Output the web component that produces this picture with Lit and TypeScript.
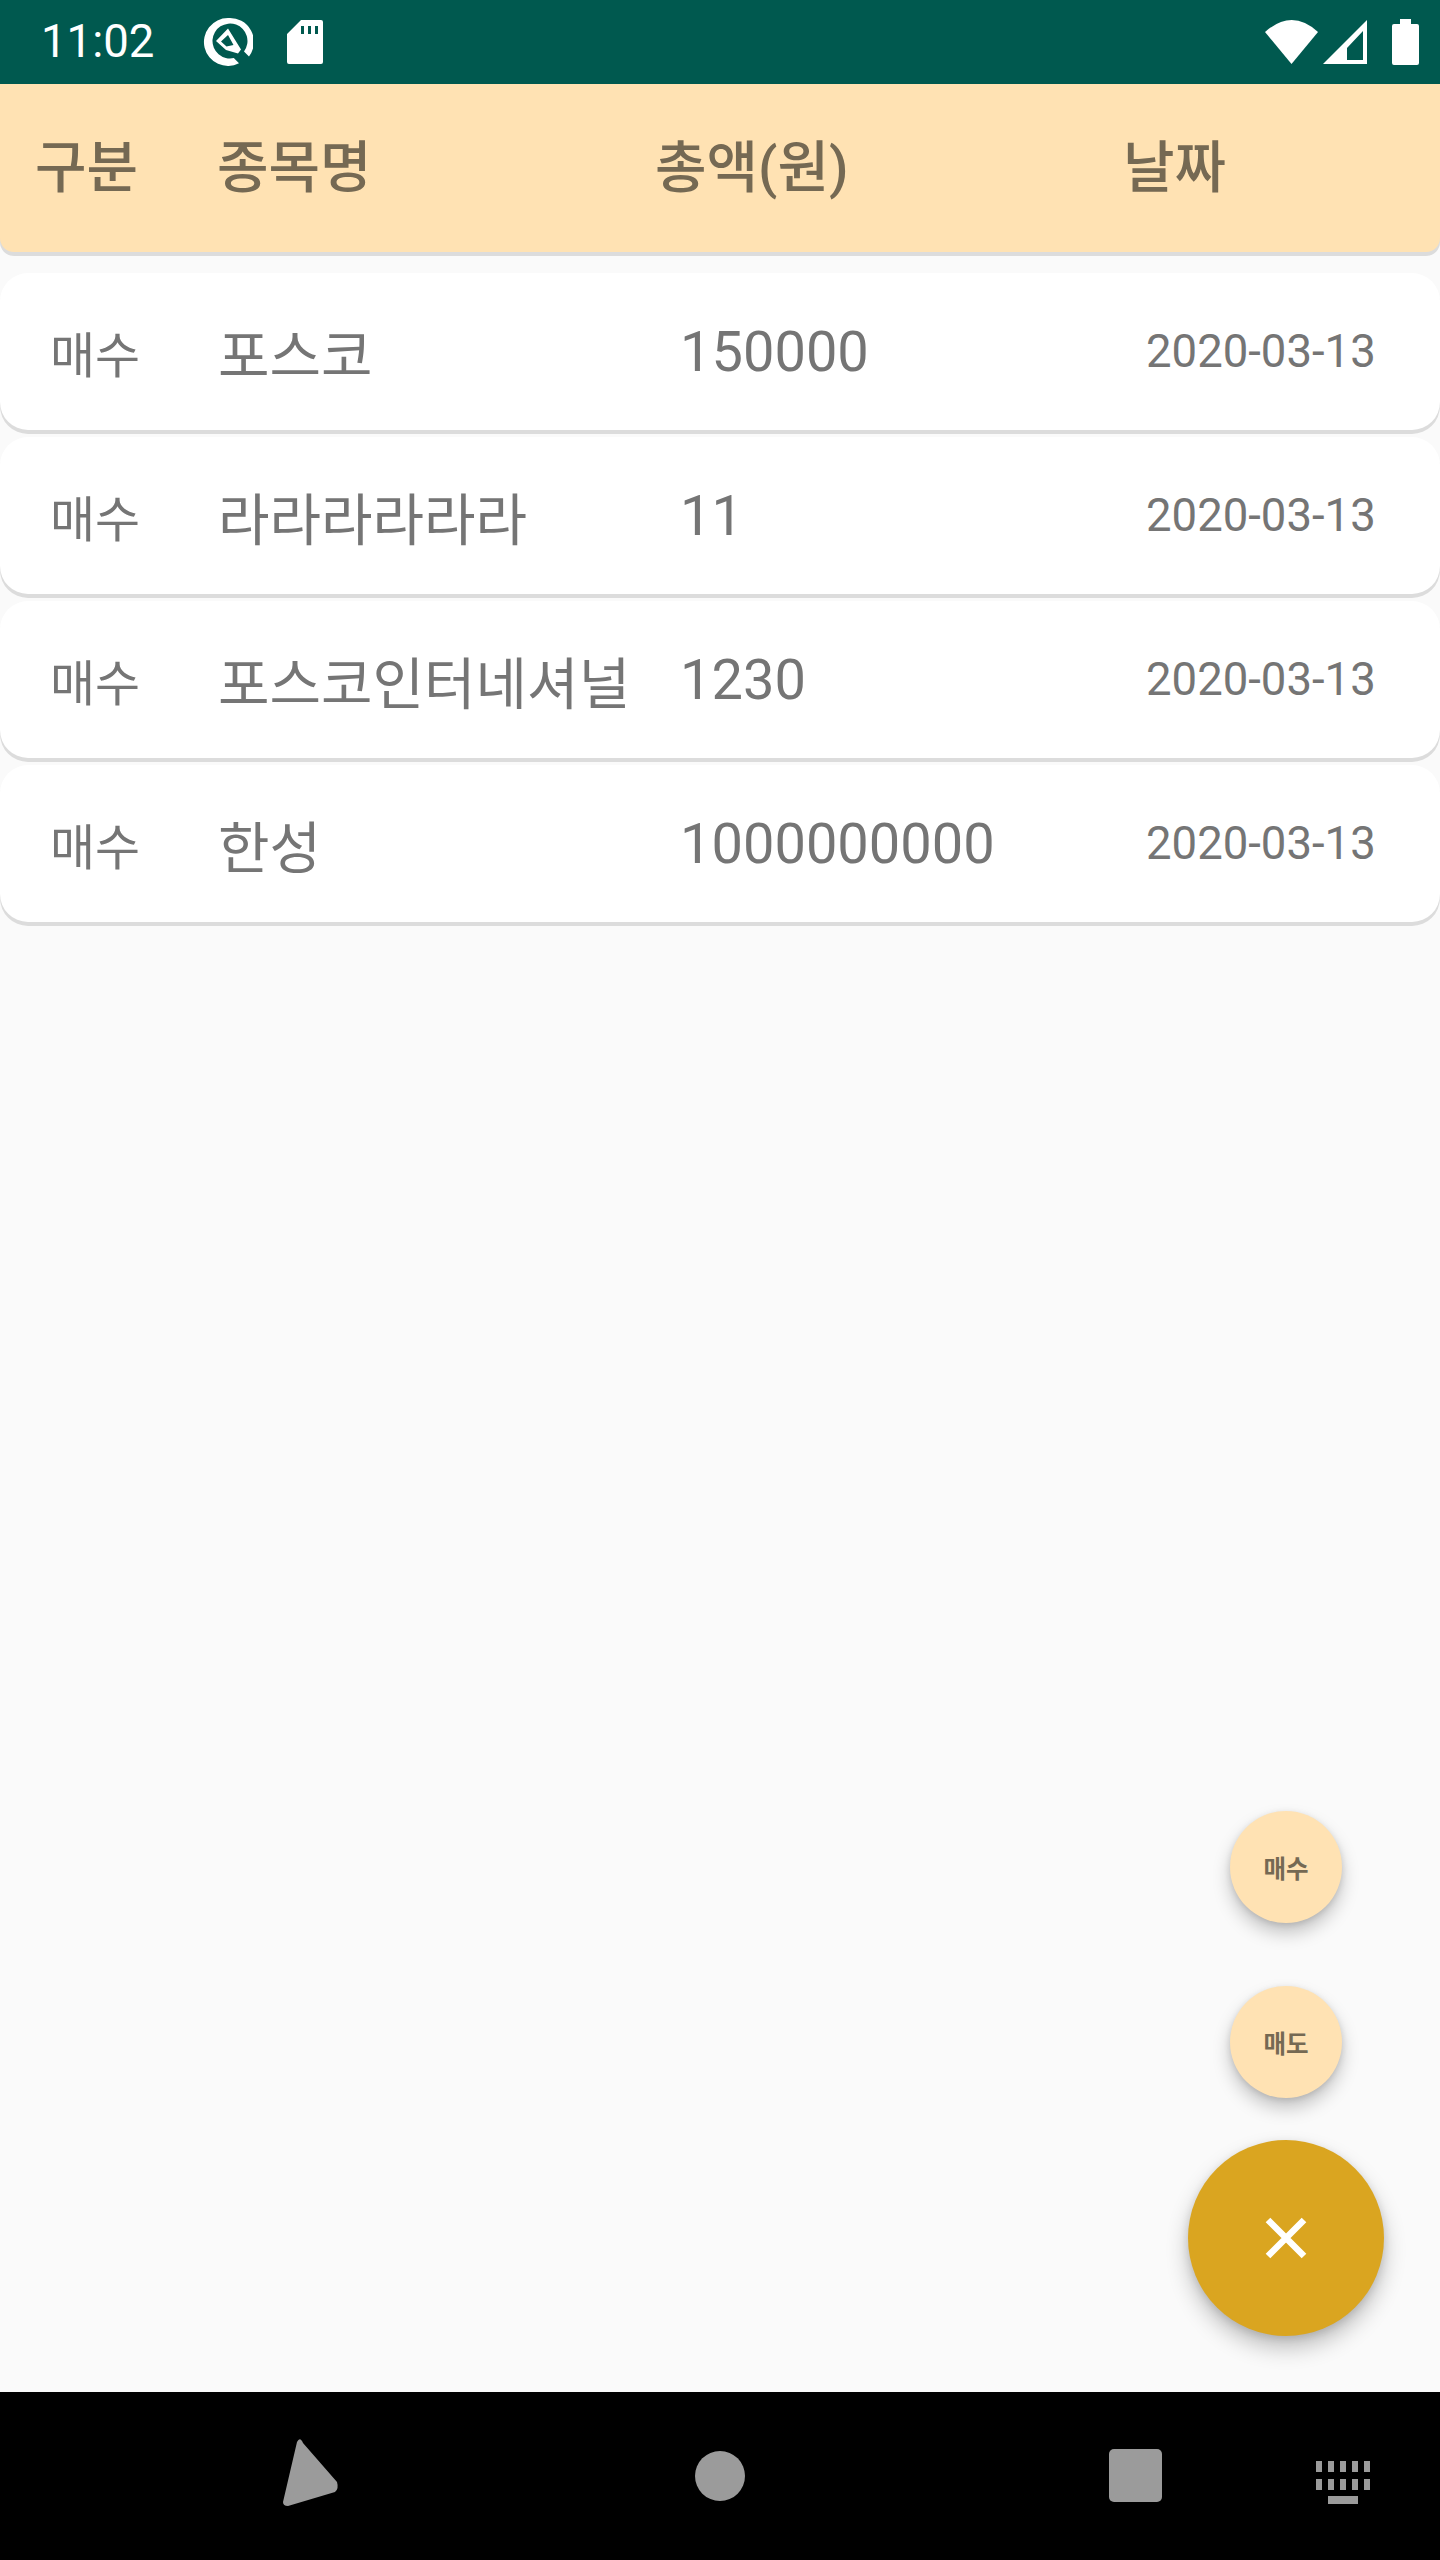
import { LitElement, html, css } from "lit";
import { customElement } from "lit/decorators.js";

const rows = [
  ["매수", "포스코", "150000", "2020-03-13"],
  ["매수", "라라라라라라", "11", "2020-03-13"],
  ["매수", "포스코인터네셔널", "1230", "2020-03-13"],
  ["매수", "한성", "1000000000", "2020-03-13"],
];

@customElement("app-root")
export class AppRoot extends LitElement {
  static styles = css`
    :host { display: block; width: 1440px; height: 2560px; font-family: Roboto, "Noto Sans CJK KR", sans-serif; }
    .app { width: 1440px; height: 2560px; display: flex; flex-direction: column; background: #fafafa; overflow: hidden; }
    .status { height: 84px; flex: none; background: #00594f; color: #fff; display: flex; align-items: center; padding: 0 21px 0 41px; box-sizing: border-box; }
    .time { font-size: 45.5px; line-height: 84px; width: 162px; }
    .status svg { display: block; fill: #fff; }
    .spacer { flex: 1; }
    .q { margin-right: 34px; }
    .main { flex: 1; position: relative; }
    .head { height: 168px; box-sizing: border-box; background: #ffe2b3; border-radius: 0 0 14px 14px; box-shadow: 0 4px 0 #dcdcdc; display: flex; align-items: center; color: #756953; font-size: 56px; font-weight: 500; line-height: 1; }
    .head span { display: block; }
    .h1 { width: 217px; padding-left: 35px; box-sizing: border-box; }
    .h2 { width: 438px; }
    .h3 { width: 468px; }
    .list { padding-top: 21px; display: flex; flex-direction: column; gap: 7px; }
    .row { height: 157px; background: #fff; border-radius: 28px; box-shadow: 0 4px 0 #dcdcdc; display: flex; align-items: center; color: #757575; }
    .c1 { width: 218px; padding-left: 50px; box-sizing: border-box; font-size: 49px; }
    .c2 { width: 462px; font-size: 56px; }
    .c3 { width: 466px; font-size: 56px; }
    .c4 { font-size: 45.5px; }
    .fab { position: absolute; border-radius: 50%; display: flex; align-items: center; justify-content: center; }
    .mini { width: 112px; height: 112px; left: 1230px; background: #ffe2b3; color: #756953; font-size: 24.5px; font-weight: 700; box-shadow: 0 10px 18px rgba(0,0,0,.22), 0 2px 6px rgba(0,0,0,.12); }
    .f1 { top: 1727px; }
    .f2 { top: 1902px; }
    .big { width: 196px; height: 196px; left: 1188px; top: 2056px; background: #daa520; box-shadow: 0 12px 22px rgba(0,0,0,.24), 0 3px 8px rgba(0,0,0,.12); }
    .nav { height: 168px; flex: none; background: #000; position: relative; }
    .nav svg { position: absolute; left: 0; top: 0; fill: #9b9b9b; }
  `;

  render() {
    return html`<div class="app">
      <div class="status">
        <span class="time">11:02</span>
        <svg class="q" width="50" height="50" viewBox="0 0 50 50">
          <path d="M25 1a24 24 0 1 0 11 45.3l-5.2-5.2A17.5 17.5 0 1 1 41 34.500l5 5A24 24 0 0 0 25 1z"/>
          <path d="M24.500 12.500 12.500 24.500 19.500 31.500 24.500 26.500 35 37 38.500 33.500 24.500 19.500 16.500 27 15.500 24.500 24.500 16 37 28.500A13 13 0 0 0 24.500 12.500z" opacity="0"/>
          <path d="M25 11.500 13 24l10 9 12 3.500 3-4z M25 18l-7 6.500 5.500 5 7-1.500z" fill-rule="evenodd"/>
        </svg>
        <svg width="36" height="44" viewBox="0 0 36 44"><path fill-rule="evenodd" d="M14 0h20a2 2 0 0 1 2 2v40a2 2 0 0 1-2 2H2a2 2 0 0 1-2-2V14zM14 6v8h3V6zM21 6v8h3V6zM28 6v8h3V6z"/></svg>
        <span class="spacer"></span>
        <svg width="54" height="44" viewBox="0 0 54 44" style="margin-right:4px"><path d="M0 12Q27-12 53 12L26.500 44z"/></svg>
        <svg width="44" height="44" viewBox="0 0 44 44" style="margin-right:25px"><path fill-rule="evenodd" d="M44 0v44H0zM40 11 24 28v12h16z"/></svg>
        <svg width="27" height="46" viewBox="0 0 27 46"><path d="M8 0h11v5h6a2 2 0 0 1 2 2v37a2 2 0 0 1-2 2H2a2 2 0 0 1-2-2V7a2 2 0 0 1 2-2h6z"/></svg>
      </div>
      <div class="main">
        <div class="head">
          <span class="h1">구분</span><span class="h2">종목명</span><span class="h3">총액(원)</span><span>날짜</span>
        </div>
        <div class="list">
          ${rows.map(r => html`<div class="row"><span class="c1">${r[0]}</span><span class="c2">${r[1]}</span><span class="c3">${r[2]}</span><span class="c4">${r[3]}</span></div>`)}
        </div>
        <div class="fab mini f1">매수</div>
        <div class="fab mini f2">매도</div>
        <div class="fab big">
          <svg width="42" height="42" viewBox="0 0 42 42"><path d="M3 3 39 39M39 3 3 39" stroke="#fff" stroke-width="6.500" fill="none"/></svg>
        </div>
      </div>
      <div class="nav">
        <svg width="1440" height="168" viewBox="0 0 1440 168">
          <path d="M297 50Q300 44 303 51L337 90Q339 97 335 100L288 114Q283 114 283 110z"/>
          <ellipse cx="720" cy="84" rx="25" ry="25"/>
          <rect x="1109" y="57" width="53" height="53" rx="5"/>
          <path d="M1316 69h6v11h-6zM1328 69h6v11h-6zM1340 69h6v11h-6zM1352 69h6v11h-6zM1364 69h6v11h-6zM1316 87h6v11h-6zM1328 87h6v11h-6zM1340 87h6v11h-6zM1352 87h6v11h-6zM1364 87h6v11h-6zM1328 104h30v8h-30z"/>
        </svg>
      </div>
    </div>`;
  }
}
